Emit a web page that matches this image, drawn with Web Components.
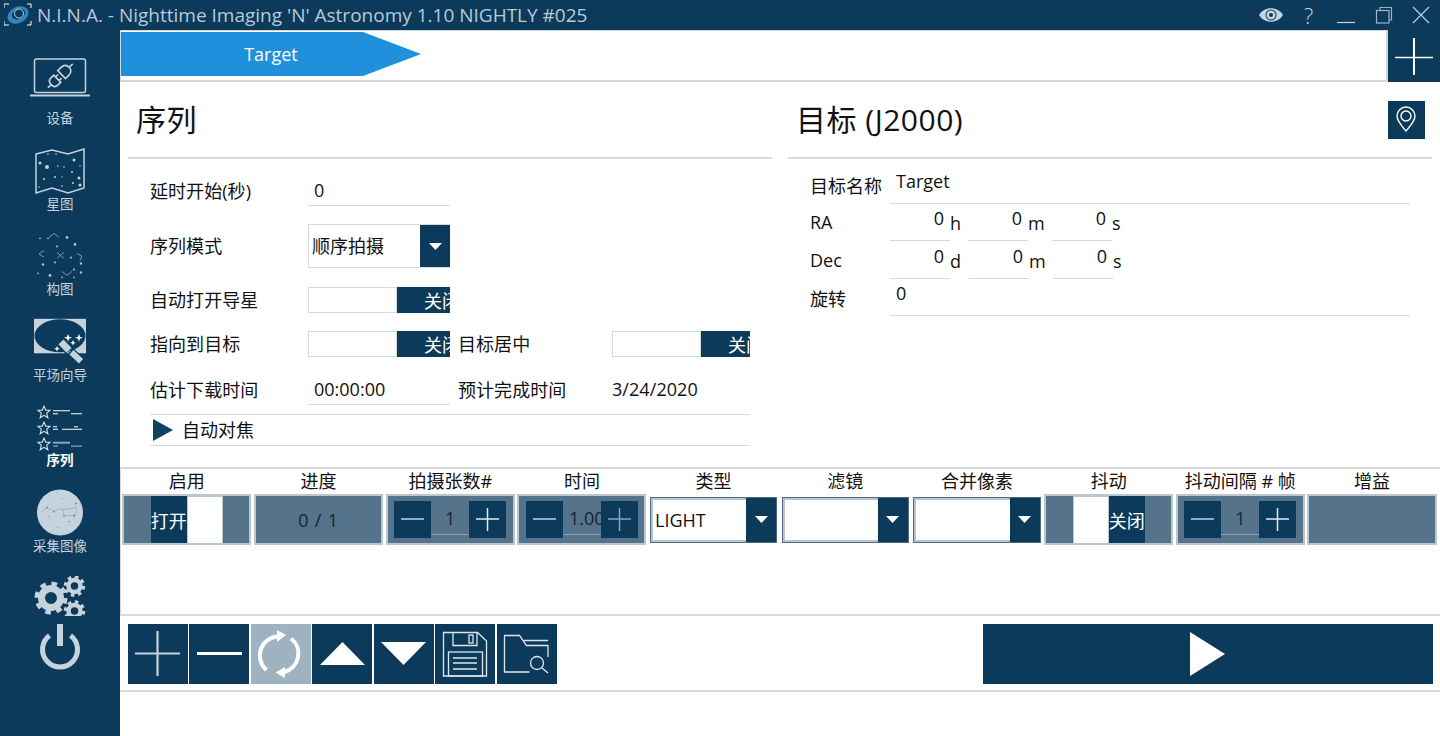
<!DOCTYPE html>
<html lang="zh">
<head>
<meta charset="utf-8">
<title>N.I.N.A.</title>
<style>
  html, body { margin: 0; height: 100%; overflow: hidden; background: #fff; }
  body {
    font-family: "Open Sans", "Noto Sans CJK SC", sans-serif;
    font-size: 18px;
    color: #111;
  }
  svg { display: block; }
</style>
</head>
<body>
<nina-app>
  <nina-titlebar slot="title"></nina-titlebar>
  <nina-sidebar slot="side">
    <nina-nav label="设备">
      <svg width="120" height="67.6" viewBox="0 41.4 120 67.6" fill="none" stroke="#c5d3dd">
        <rect x="34.5" y="59.5" width="51" height="33.5" rx="2" stroke-width="1.5"/>
        <path d="M30 96h60" stroke-width="2"/>
        <g transform="rotate(-44 60.500 76)" stroke-width="1.700">
          <path d="M43 76h4.500M47.500 76c0-3.500 2-5 4.500-5h4v10h-4c-2.500 0-4.500-1.500-4.500-5zM56 73.500h3.500M56 78.500h3.500"/>
          <path d="M62 70.500h5c3.500 0 5.500 2.500 5.500 5.500s-2 5.500-5.500 5.500h-5zM72.500 76h5"/>
        </g>
      </svg>
    </nina-nav>
    <nina-nav label="星图">
      <svg width="120" height="67.6" viewBox="0 127 120 67.6" fill="none">
        <path d="M36 154l16-4 16 4 16-5v39l-16 5-16-5-16 5z" stroke="#c5d3dd" stroke-width="1.500"/>
        <g fill="#c5d3dd">
          <circle cx="40" cy="163" r="1.500"/><circle cx="47" cy="167" r="2"/><circle cx="74" cy="160" r="1.500"/>
          <circle cx="48" cy="154" r=".8"/><circle cx="56" cy="154" r=".8"/><circle cx="58" cy="166" r=".8"/>
          <circle cx="64" cy="167" r=".8"/><circle cx="72" cy="172" r="1"/><circle cx="79" cy="178" r="1.500"/>
          <circle cx="44" cy="179" r="1"/><circle cx="55" cy="177" r="1"/><circle cx="62" cy="177" r=".7"/>
          <circle cx="80" cy="185" r="1.500"/><circle cx="73" cy="183" r="1"/><circle cx="39" cy="187" r=".8"/>
          <circle cx="62" cy="186" r=".8"/><circle cx="80" cy="166" r=".7"/>
        </g>
      </svg>
    </nina-nav>
    <nina-nav label="构图">
      <svg width="120" height="67.6" viewBox="0 212.6 120 67.6" fill="none">
        <g stroke="#7f9cb0" stroke-width="1">
          <path d="M44 250l-5 3.500 5 3.500M57 252l7 6M64 252l-7 6M77 253l5 3-2 4M62 271l5 4 5-4M49 237l5-4 5 4"/>
        </g>
        <g fill="#b6c7d3">
          <circle cx="75" cy="244" r="1.300"/><circle cx="57" cy="246" r="1"/><circle cx="71" cy="257" r="1"/>
          <circle cx="55" cy="262" r="1"/><circle cx="43" cy="264" r="1.200"/><circle cx="81" cy="263" r="1.200"/>
          <circle cx="50" cy="275" r="1.400"/><circle cx="74" cy="269" r="1"/><circle cx="81" cy="272" r="1.200"/>
          <circle cx="74" cy="277" r=".8"/><circle cx="62" cy="277" r=".8"/><circle cx="38" cy="273" r=".8"/>
          <circle cx="67" cy="237" r="1.300"/><circle cx="40" cy="238" r=".8"/><circle cx="48" cy="238" r=".8"/>
        </g>
      </svg>
    </nina-nav>
    <nina-nav label="平场向导">
      <svg width="120" height="67.6" viewBox="0 298.2 120 67.6" overflow="visible">
        <rect x="34" y="319" width="52" height="34.500" fill="#c5d3dd"/>
        <ellipse cx="60" cy="336" rx="25.500" ry="16.500" fill="#0b3a5b"/>
        <path d="M61 342l8.500 9" stroke="#0b3a5b" stroke-width="10"/>
        <path d="M61 342l8 8.500" stroke="#c5d3dd" stroke-width="7"/>
        <path d="M70.500 351.500l10.500 10" stroke="#0b3a5b" stroke-width="8.500"/>
        <path d="M71.500 352.500l9.500 9" stroke="#c5d3dd" stroke-width="6"/>
        <g fill="#fff">
          <path d="M68 334l1 3 3 1-3 1-1 3-1-3-3-1 3-1z"/>
          <path d="M79 334l1 3 3 1-3 1-1 3-1-3-3-1 3-1z"/>
          <path d="M73 340l.8 2.200 2.200.8-2.200.8-.8 2.200-.8-2.200-2.200-.8 2.200-.8z"/>
          <path d="M57 346l.8 2.200 2.200.8-2.200.8-.8 2.200-.8-2.200-2.200-.8 2.200-.8z"/>
        </g>
      </svg>
    </nina-nav>
    <nina-nav label="序列" active>
      <svg width="120" height="67.6" viewBox="0 383.8 120 67.6" fill="none" stroke="#d9e3ea">
        <g stroke-width="1.100">
          <path d="M44 406l1.800 4h4.200l-3.300 3 1.100 4.500-3.800-2.400-3.800 2.400 1.100-4.500-3.300-3h4.200z"/>
          <path d="M44 422l1.800 4h4.200l-3.300 3 1.100 4.500-3.800-2.400-3.800 2.400 1.100-4.500-3.300-3h4.200z"/>
          <path d="M44 438l1.800 4h4.200l-3.300 3 1.100 4.500-3.800-2.400-3.800 2.400 1.100-4.500-3.300-3h4.200z"/>
          <path d="M53 410.500h17M53 413.500h5M71 413.500h11M53 426.500h4M53 429h5M61 426.500h0M62 429h20M74 426.500h4" stroke="#fff"/>
        </g>
        <path d="M53 442.500h17" stroke="#8ba4b6" stroke-width="2"/>
        <path d="M53 446h5M71 446h11" stroke="#8ba4b6" stroke-width="1.200"/>
      </svg>
    </nina-nav>
    <nina-nav label="采集图像">
      <svg width="120" height="67.6" viewBox="0 469.400 120 67.6" fill="none">
        <circle cx="60" cy="513" r="23" fill="#c5d3dd"/>
        <path d="M41 513l6-5 7 4 6-3 3 1 13-2 1 4-3 7M63 510l1 6h10" stroke="#8aa3b6" stroke-width=".6"/>
        <g fill="#7592a8">
          <circle cx="47" cy="508" r="1"/><circle cx="54" cy="512" r="1"/><circle cx="64" cy="516" r="1"/>
          <circle cx="74" cy="516" r="1"/><circle cx="76" cy="504" r="1"/><circle cx="62" cy="499" r=".7"/>
          <circle cx="49" cy="517" r=".7"/><circle cx="69" cy="522" r=".8"/><circle cx="58" cy="528" r=".7"/>
          <circle cx="57" cy="493" r=".6"/>
        </g>
      </svg>
    </nina-nav>
    <nina-system></nina-system>
  </nina-sidebar>

  <nina-tabstrip slot="main"><nina-arrow-tab>Target</nina-arrow-tab></nina-tabstrip>

  <nina-panes slot="main">
    <nina-pane heading="序列">
      <nina-sequence-form>
        <nina-label>延时开始(秒)</nina-label>
        <nina-input>0</nina-input>
        <span></span><span></span><span></span>

        <nina-label tall>序列模式</nina-label>
        <nina-combo value="顺序拍摄" mode="form"></nina-combo>
        <span></span><span></span><span></span>

        <nina-label short>自动打开导星</nina-label>
        <nina-toggle mode="form"></nina-toggle>
        <span></span><span></span><span></span>

        <nina-label short>指向到目标</nina-label>
        <nina-toggle mode="form"></nina-toggle>
        <span></span>
        <nina-label short>目标居中</nina-label>
        <nina-toggle mode="form"></nina-toggle>

        <nina-label>估计下载时间</nina-label>
        <nina-input>00:00:00</nina-input>
        <span></span>
        <nina-label>预计完成时间</nina-label>
        <nina-label>3/24/2020</nina-label>
      </nina-sequence-form>
      <nina-expander>自动对焦</nina-expander>
    </nina-pane>

    <nina-pane heading="目标 (J2000)">
      <nina-icon-btn slot="action" size="37">
        <svg width="37" height="38" viewBox="0 0 37 38" fill="none" stroke="#fff" stroke-width="1.400">
          <path d="M18 30c-5-6-9-10-9-15a9 9 0 0 1 18 0c0 5-4 9-9 15z"/>
          <circle cx="18" cy="15" r="5"/>
        </svg>
      </nina-icon-btn>
      <nina-target-form>
        <nina-target-row label="目标名称" height="45" drop="6"><nina-input right-pane grow>Target</nina-input></nina-target-row>
        <nina-target-row label="RA" height="37" drop="7">
          <nina-input right-pane numeric>0</nina-input><nina-unit width="18">h</nina-unit>
          <nina-input right-pane numeric>0</nina-input><nina-unit width="24">m</nina-unit>
          <nina-input right-pane numeric>0</nina-input><nina-unit width="18">s</nina-unit>
        </nina-target-row>
        <nina-target-row label="Dec" height="38" drop="7">
          <nina-input right-pane numeric>0</nina-input><nina-unit width="19">d</nina-unit>
          <nina-input right-pane numeric>0</nina-input><nina-unit width="24">m</nina-unit>
          <nina-input right-pane numeric>0</nina-input><nina-unit width="18">s</nina-unit>
        </nina-target-row>
        <nina-target-row label="旋转" height="37" drop="5"><nina-input right-pane grow>0</nina-input></nina-target-row>
      </nina-target-form>
    </nina-pane>
  </nina-panes>

  <nina-table slot="main">
    <nina-th>启用</nina-th><nina-th>进度</nina-th><nina-th>拍摄张数#</nina-th><nina-th>时间</nina-th><nina-th>类型</nina-th>
    <nina-th>滤镜</nina-th><nina-th>合并像素</nina-th><nina-th>抖动</nina-th><nina-th>抖动间隔 # 帧</nina-th><nina-th>增益</nina-th>

    <nina-cell><nina-toggle mode="on"></nina-toggle></nina-cell>
    <nina-cell><span style="font-size:18px;color:#16242e;letter-spacing:.8px">0 / 1</span></nina-cell>
    <nina-cell><nina-stepper value="1"></nina-stepper></nina-cell>
    <nina-cell><nina-stepper value="1.00" dim></nina-stepper></nina-cell>
    <nina-cell plain><nina-combo value="LIGHT" mode="cell"></nina-combo></nina-cell>
    <nina-cell plain><nina-combo mode="cell"></nina-combo></nina-cell>
    <nina-cell plain><nina-combo mode="cell"></nina-combo></nina-cell>
    <nina-cell><nina-toggle mode="off"></nina-toggle></nina-cell>
    <nina-cell><nina-stepper value="1"></nina-stepper></nina-cell>
    <nina-cell></nina-cell>
  </nina-table>

  <nina-toolbar slot="main">
    <nina-icon-btn>
      <svg width="60" height="60" viewBox="0 0 60 60" fill="none"><path d="M7 29.500h45M29.500 7v45" stroke="#c5d3dd" stroke-width="2.200"/></svg>
    </nina-icon-btn>
    <nina-icon-btn>
      <svg width="60" height="60" viewBox="0 0 60 60" fill="none"><path d="M8 29.500h45" stroke="#fff" stroke-width="3"/></svg>
    </nina-icon-btn>
    <nina-icon-btn disabled>
      <svg width="60" height="60" viewBox="0 0 60 60" fill="none">
        <path d="M27 12.500A19 19 0 0 0 15.500 46" stroke="#fff" stroke-width="4"/>
        <path d="M26 6l9 5-9 7z" fill="#fff"/>
        <path d="M40 14.500A19 19 0 0 1 33 48" stroke="#fff" stroke-width="4"/>
        <path d="M34 43l-9.500 5.500L34 54z" fill="#fff"/>
      </svg>
    </nina-icon-btn>
    <nina-icon-btn>
      <svg width="60" height="60" viewBox="0 0 60 60"><path d="M8 41h45L30.500 18z" fill="#fff"/></svg>
    </nina-icon-btn>
    <nina-icon-btn>
      <svg width="60" height="60" viewBox="0 0 60 60"><path d="M7 18h45L29.500 41z" fill="#fff"/></svg>
    </nina-icon-btn>
    <nina-icon-btn>
      <svg width="60" height="60" viewBox="0 0 60 60" fill="none" stroke="#dfe7ec" stroke-width="1.300">
        <path d="M8.500 8.500h34l9 8.500v35h-43z"/>
        <path d="M18 8.500v13h24v-13"/>
        <rect x="34" y="11" width="4" height="8"/>
        <rect x="13.500" y="28" width="34" height="24"/>
        <path d="M18 34h24M18 39h24M18 45h24"/>
      </svg>
    </nina-icon-btn>
    <nina-icon-btn>
      <svg width="60" height="60" viewBox="0 0 60 60" fill="none" stroke="#dfe7ec" stroke-width="1.300">
        <path d="M7.500 33V11.500h15l7 10h21.500V33M51 16.500H27M7.500 33v15h25"/>
        <circle cx="40" cy="39" r="6.500"/>
        <path d="M45 44l6 5"/>
      </svg>
    </nina-icon-btn>
    <nina-icon-btn wide>
      <svg width="40" height="60" viewBox="0 0 40 60"><path d="M2 8v44l35-22z" fill="#fff"/></svg>
    </nina-icon-btn>
  </nina-toolbar>
</nina-app>

<script>
// shared base, every element just fills its own shadow root
class NinaElement extends HTMLElement {
  constructor() {
    super();
    this.attachShadow({ mode: 'open' });
  }

  connectedCallback() {
    this.render();
  }
}

class NinaApp extends NinaElement {
  render() {
    this.shadowRoot.innerHTML = `
    <style>
      :host { display: grid; grid-template: 30px 706px / 120px 1320px; width: 1440px; height: 736px; }
      .title { grid-column: 1 / 3; display: block; }
      .main { display: flex; flex-direction: column; min-width: 0; }
    </style>
    <div class="title"><slot name="title"></slot></div>
    <slot name="side"></slot>
    <div class="main"><slot name="main"></slot></div>`;
  }
}

class NinaTitlebar extends NinaElement {
  render() {
    this.shadowRoot.innerHTML = `
    <style>
      :host { display: flex; align-items: center; height: 30px; background: #0b3a5b; color: #b9cad6; }
      .logo { margin-left: 4px; width: 28px; height: 24px; flex: none; }
      .text { margin-left: 5px; font-size: 19px; white-space: nowrap; flex: 1; line-height: 30px; }
      .controls { display: flex; align-items: center; margin-right: 0; }
      .controls > * { width: 37.500px; height: 30px; display: flex; align-items: center; justify-content: center; }
      .help { font-size: 22px; font-weight: 300; color: #c5d3dd; line-height: 30px; }
    </style>
    <svg class="logo" viewBox="0 0 28 24" fill="none">
      <path d="M0 5V1h5M23 1h4v4M0 18v4h5M23 22h4v-4" stroke="#fff" stroke-width="1"/>
      <ellipse cx="14" cy="12" rx="11" ry="8" transform="rotate(-25 14 12)" fill="#2f86c6"/>
      <ellipse cx="14.500" cy="11" rx="7" ry="5" transform="rotate(-25 14.500 11)" fill="#0b3a5b"/>
      <circle cx="15" cy="10.500" r="4.500" stroke="#dbe7ef" stroke-width=".9"/>
    </svg>
    <span class="text">N.I.N.A. - Nighttime Imaging 'N' Astronomy 1.10 NIGHTLY #025</span>
    <div class="controls">
      <div><svg width="24" height="14" viewBox="0 0 24 14"><path d="M0 7c5-9 19-9 24 0-5 9-19 9-24 0z" fill="#c5d3dd"/><circle cx="12" cy="7" r="5.500" fill="#0b3a5b"/><circle cx="12" cy="7" r="4.500" fill="#c5d3dd"/><circle cx="12" cy="7" r="2" fill="#0b3a5b"/></svg></div>
      <div class="help">?</div>
      <div><svg width="20" height="30" viewBox="0 0 20 30"><path d="M1 22.500h18" stroke="#c5d3dd" stroke-width="1.200"/></svg></div>
      <div><svg width="18" height="18" viewBox="0 0 18 18" fill="none" stroke="#9fb5c5" stroke-width="1.200"><rect x="1.500" y="4.500" width="12.500" height="12.500"/><path d="M5 4.500V1.500h11.500V14H14"/></svg></div>
      <div><svg width="18" height="18" viewBox="0 0 18 18" fill="none" stroke="#c5d3dd" stroke-width="1.100"><path d="M1 1l16 16M17 1L1 17"/></svg></div>
    </div>`;
  }
}

class NinaSidebar extends NinaElement {
  render() {
    this.shadowRoot.innerHTML = `
    <style>
      :host { display: flex; flex-direction: column; background: #0b3a5b; padding-top: 11.400px; }
    </style>
    <slot></slot>`;
  }
}

class NinaNav extends NinaElement {
  render() {
    const active = this.hasAttribute('active');
    this.shadowRoot.innerHTML = `
    <style>
      :host { display: flex; flex-direction: column; align-items: center; justify-content: flex-end; height: 85.600px; flex: none; }
      ::slotted(svg) { flex: none; display: block; }
      .label { font-size: 13.500px; line-height: 18px; color: ${active ? '#fff' : '#c5d3dd'}; font-weight: ${active ? 700 : 400}; white-space: nowrap; }
    </style>
    <slot></slot>
    <div class="label">${this.getAttribute('label')}</div>`;
  }
}

class NinaSystem extends NinaElement {
  render() {
    this.shadowRoot.innerHTML = `
    <style>
      :host { display: block; margin-top: 21px; }
      svg { display: block; }
    </style>
    <svg width="120" height="95" viewBox="0 576 120 95" fill="none" stroke="#c5d3dd">
      <circle cx="51" cy="598" r="9.500" stroke-width="7"/>
      <circle cx="51" cy="598" r="14" stroke-width="5" stroke-dasharray="5.500 5.500"/>
      <circle cx="74.500" cy="586" r="6" stroke-width="4.500"/>
      <circle cx="74.500" cy="586" r="9" stroke-width="3.500" stroke-dasharray="3.500 3.570"/>
      <svg x="60" y="598" width="30" height="18" viewBox="60 598 30 18" overflow="hidden">
        <circle cx="74.500" cy="611" r="6" stroke-width="4.500"/>
        <circle cx="74.500" cy="611" r="9" stroke-width="3.500" stroke-dasharray="3.500 3.570"/>
      </svg>
      <path d="M49.500 635.500A17.500 17.500 0 1 0 70.500 635.500" stroke-width="5"/>
      <path d="M60 624v22" stroke-width="6"/>
    </svg>`;
  }
}

class NinaTabstrip extends NinaElement {
  render() {
    this.shadowRoot.innerHTML = `
    <style>
      :host { display: flex; height: 52px; flex: none; background: #fff; }
      .strip { flex: 1; border: solid #d4d6d7; border-width: 1.500px 2px 2px 1.500px; padding-top: 1px; box-sizing: border-box; }
      .add { width: 52px; background: #0b3a5b; }
      svg { display: block; }
    </style>
    <div class="strip"><slot></slot></div>
    <div class="add">
      <svg width="52" height="52" viewBox="0 0 52 52"><path d="M7 27.500h38" stroke="#fff" stroke-width="1.500"/><path d="M26 8v37" stroke="#fff" stroke-width="2"/></svg>
    </div>`;
  }
}

class NinaArrowTab extends NinaElement {
  render() {
    this.shadowRoot.innerHTML = `
    <style>
      :host {
        display: flex; align-items: center; justify-content: center;
        width: 300px; height: 44px; background: #2090dc; color: #fff;
        clip-path: polygon(0 0, 242px 0, 100% 50%, 242px 100%, 0 100%);
      }
    </style>
    <slot></slot>`;
  }
}

class NinaPanes extends NinaElement {
  render() {
    this.shadowRoot.innerHTML = `
    <style>
      :host { display: grid; grid-template-columns: 644px 644px; column-gap: 16px; padding-left: 8px; height: 385px; flex: none; box-sizing: border-box; }
    </style>
    <slot></slot>`;
  }
}

class NinaPane extends NinaElement {
  render() {
    this.shadowRoot.innerHTML = `
    <style>
      :host { display: block; min-width: 0; }
      header {
        display: flex; align-items: center; justify-content: space-between;
        height: 77px; box-sizing: border-box; padding: 0 7px 0 8px;
        border-bottom: 2px solid #d8d9da;
      }
      h2 { margin: 0; font-size: 30px; font-weight: 400; line-height: 40px; letter-spacing: .5px; }
      .body { padding: 0 22px; }
    </style>
    <header><h2>${this.getAttribute('heading')}</h2><slot name="action"></slot></header>
    <div class="body"><slot></slot></div>`;
  }
}

class NinaSequenceForm extends NinaElement {
  render() {
    this.shadowRoot.innerHTML = `
    <style>
      :host {
        display: grid;
        grid-template-columns: 158px 142px 8px 154px 138px;
        grid-template-rows: 47px 62px 45px 44px 48px;
        align-items: end;
      }
    </style>
    <slot></slot>`;
  }
}

class NinaLabel extends NinaElement {
  render() {
    const height = this.hasAttribute('tall') ? 44 : this.hasAttribute('short') ? 26 : 30;
    this.shadowRoot.innerHTML = `
    <style>
      :host { display: flex; align-items: center; box-sizing: border-box; height: ${height}px; padding-bottom: 2px; white-space: nowrap; letter-spacing: .06px; }
    </style>
    <slot></slot>`;
  }
}

class NinaInput extends NinaElement {
  render() {
    const rightPane = this.hasAttribute('right-pane');
    const numeric = this.hasAttribute('numeric');
    const grow = this.hasAttribute('grow');
    this.shadowRoot.innerHTML = `
    <style>
      :host {
        display: flex; align-items: flex-end; box-sizing: border-box;
        height: ${rightPane ? 36 : 30}px;
        ${numeric ? 'width: 60px; justify-content: flex-end; padding-right: 6px;' : 'padding-left: 6px;'}
        ${grow ? 'flex: 1;' : ''}
        padding-bottom: ${rightPane ? 12.5 : 5}px;
        border-bottom: 1.500px solid #d8d9da;
        line-height: 20px;
        flex-shrink: 0;
      }
    </style>
    <slot></slot>`;
  }
}

class NinaCombo extends NinaElement {
  render() {
    const cell = this.getAttribute('mode') === 'cell';
    const form = `
      :host { display: flex; height: 44px; width: 142px; box-sizing: border-box; border: 1.500px solid #d8d9da; border-right: 0; }
      .value { flex: 1; padding-left: 3px; line-height: 43px; }
      .drop { width: 30px; }`;
    const inCell = `
      :host { display: flex; width: 128px; height: 46px; box-sizing: border-box; border: 1px solid #4e6d85; background: #fff; }
      .value { flex: 1; padding-left: 2px; border: solid #b9c3ca; border-width: 2px 0 2px 2px; line-height: 40px; }
      .drop { width: 30px; }`;
    this.shadowRoot.innerHTML = `
    <style>
      ${cell ? inCell : form}
      .value { white-space: nowrap; overflow: hidden; background: #fff; }
      .drop { background: #0b3a5b; display: flex; align-items: center; justify-content: center; flex: none; }
    </style>
    <div class="value">${this.getAttribute('value') || ''}</div>
    <div class="drop"><svg width="13" height="7" viewBox="0 0 13 7"><path d="M0 0h13L6.500 7z" fill="#fff"/></svg></div>`;
  }
}

class NinaToggle extends NinaElement {
  render() {
    const mode = this.getAttribute('mode');
    let css, html;
    if (mode === 'form') {
      css = `
        :host { display: flex; width: 100%; height: 26px; overflow: hidden; }
        .knob { width: 89px; flex: none; box-sizing: border-box; border: 1.500px solid #d8d9da; background: #fff; }
        .state { flex: 1; padding-left: 27px; white-space: nowrap; overflow: hidden; }`;
      html = `<div class="knob"></div><div class="state">关闭</div>`;
    } else {
      css = `
        :host { display: flex; width: 72px; height: 48px; }
        .knob { width: 36px; flex: none; box-sizing: border-box; border: 1.500px solid #bcc6cd; background: #fff; }
        .state { width: 36px; flex: none; justify-content: center; white-space: nowrap; }`;
      html = mode === 'on'
        ? `<div class="state">打开</div><div class="knob"></div>`
        : `<div class="knob"></div><div class="state">关闭</div>`;
    }
    this.shadowRoot.innerHTML = `
    <style>
      ${css}
      .state { background: #0b3a5b; color: #fff; display: flex; align-items: center; font-size: 18px; }
    </style>
    ${html}`;
  }
}

class NinaStepper extends NinaElement {
  render() {
    const dim = this.hasAttribute('dim');
    this.shadowRoot.innerHTML = `
    <style>
      :host { display: flex; width: 112px; height: 37px; }
      .btn { width: 37px; background: #0b3a5b; flex: none; }
      .value {
        flex: 1; min-width: 0; box-sizing: border-box; height: 33.500px; overflow: hidden; white-space: nowrap;
        border-bottom: 1.500px solid #8a9fb0; text-align: ${dim ? 'left' : 'center'}; padding-left: ${dim ? 6 : 0}px;
        font-size: 18px; line-height: 34px; color: #16242e;
      }
      svg { display: block; }
    </style>
    <div class="btn"><svg width="37" height="37" viewBox="0 0 37 37"><path d="M7 18h23" stroke="#c5d3dd" stroke-width="1.500"/></svg></div>
    <div class="value">${this.getAttribute('value')}</div>
    <div class="btn"><svg width="37" height="37" viewBox="0 0 37 37"><path d="M7 18h23M18.500 7v23" stroke="${dim ? '#8ea4b4' : '#e4ebf0'}" stroke-width="1.500"/></svg></div>`;
  }
}

class NinaExpander extends NinaElement {
  render() {
    this.shadowRoot.innerHTML = `
    <style>
      :host {
        display: flex; align-items: center; height: 30px; box-sizing: content-box; margin-top: 9px;
        border-top: 1.500px solid #d8d9da; border-bottom: 1.500px solid #d8d9da;
      }
      svg { margin: 0 9px 0 3px; flex: none; }
      .text { padding-bottom: 2px; }
    </style>
    <svg width="20" height="22" viewBox="0 0 20 22"><path d="M0 0l20 11L0 22z" fill="#0f4163"/></svg>
    <div class="text"><slot></slot></div>`;
  }
}

class NinaTargetForm extends NinaElement {
  render() {
    this.shadowRoot.innerHTML = `
    <style>
      :host { display: block; }
    </style>
    <slot></slot>`;
  }
}

class NinaTargetRow extends NinaElement {
  render() {
    this.shadowRoot.innerHTML = `
    <style>
      :host { display: flex; align-items: flex-end; height: ${this.getAttribute('height')}px; box-sizing: border-box; }
      .label { width: 80px; flex: none; line-height: 24px; padding-bottom: ${this.getAttribute('drop')}px; white-space: nowrap; }
    </style>
    <div class="label">${this.getAttribute('label')}</div>
    <slot></slot>`;
  }
}

class NinaUnit extends NinaElement {
  render() {
    this.shadowRoot.innerHTML = `
    <style>
      :host { display: block; width: ${this.getAttribute('width')}px; line-height: 24px; padding-bottom: 6px; flex: none; }
    </style>
    <slot></slot>`;
  }
}

class NinaTable extends NinaElement {
  render() {
    this.shadowRoot.innerHTML = `
    <style>
      :host {
        display: grid; grid-template-columns: repeat(10, 131.700px); grid-template-rows: 25px 52px;
        align-content: start;
        height: 149px; flex: none; box-sizing: border-box; padding-right: 2px;
        border: solid #d8d9da; border-width: 2px 0 2px 1px;
      }
    </style>
    <slot></slot>`;
  }
}

class NinaTh extends NinaElement {
  render() {
    this.shadowRoot.innerHTML = `
    <style>
      :host { display: block; text-align: center; line-height: 24px; white-space: nowrap; }
    </style>
    <slot></slot>`;
  }
}

class NinaCell extends NinaElement {
  render() {
    const plain = this.hasAttribute('plain');
    this.shadowRoot.innerHTML = `
    <style>
      :host {
        display: flex; align-items: center; justify-content: center; box-sizing: border-box;
        margin: 0 1.300px; min-width: 0; overflow: hidden; height: 51px;
        background: ${plain ? '#fff' : '#55738b'};
        border: ${plain ? '1px solid #fff' : '2px solid #bcc6cd'};
      }
    </style>
    <slot></slot>`;
  }
}

class NinaToolbar extends NinaElement {
  render() {
    this.shadowRoot.innerHTML = `
    <style>
      :host {
        display: flex; gap: 1.490px; height: 76px; box-sizing: border-box; flex: none;
        padding: 8px 7px 6px 8px; border-bottom: 2px solid #d8d9da;
      }
    </style>
    <slot></slot>`;
  }
}

class NinaIconBtn extends NinaElement {
  render() {
    const wide = this.hasAttribute('wide');
    const size = Number(this.getAttribute('size')) || 60;
    this.shadowRoot.innerHTML = `
    <style>
      :host {
        display: flex; align-items: center; justify-content: center; flex: none;
        width: ${wide ? 450 : size}px; height: ${size === 60 ? 60 : 38}px;
        ${wide ? 'margin-left: auto;' : ''}
        background: ${this.hasAttribute('disabled') ? '#9fb2c0' : '#0b3a5b'};
      }
    </style>
    <slot></slot>`;
  }
}

window.customElements.define('nina-app', NinaApp);
window.customElements.define('nina-titlebar', NinaTitlebar);
window.customElements.define('nina-sidebar', NinaSidebar);
window.customElements.define('nina-nav', NinaNav);
window.customElements.define('nina-system', NinaSystem);
window.customElements.define('nina-tabstrip', NinaTabstrip);
window.customElements.define('nina-arrow-tab', NinaArrowTab);
window.customElements.define('nina-panes', NinaPanes);
window.customElements.define('nina-pane', NinaPane);
window.customElements.define('nina-sequence-form', NinaSequenceForm);
window.customElements.define('nina-label', NinaLabel);
window.customElements.define('nina-input', NinaInput);
window.customElements.define('nina-combo', NinaCombo);
window.customElements.define('nina-toggle', NinaToggle);
window.customElements.define('nina-stepper', NinaStepper);
window.customElements.define('nina-expander', NinaExpander);
window.customElements.define('nina-target-form', NinaTargetForm);
window.customElements.define('nina-target-row', NinaTargetRow);
window.customElements.define('nina-unit', NinaUnit);
window.customElements.define('nina-table', NinaTable);
window.customElements.define('nina-th', NinaTh);
window.customElements.define('nina-cell', NinaCell);
window.customElements.define('nina-toolbar', NinaToolbar);
window.customElements.define('nina-icon-btn', NinaIconBtn);
</script>
</body>
</html>
